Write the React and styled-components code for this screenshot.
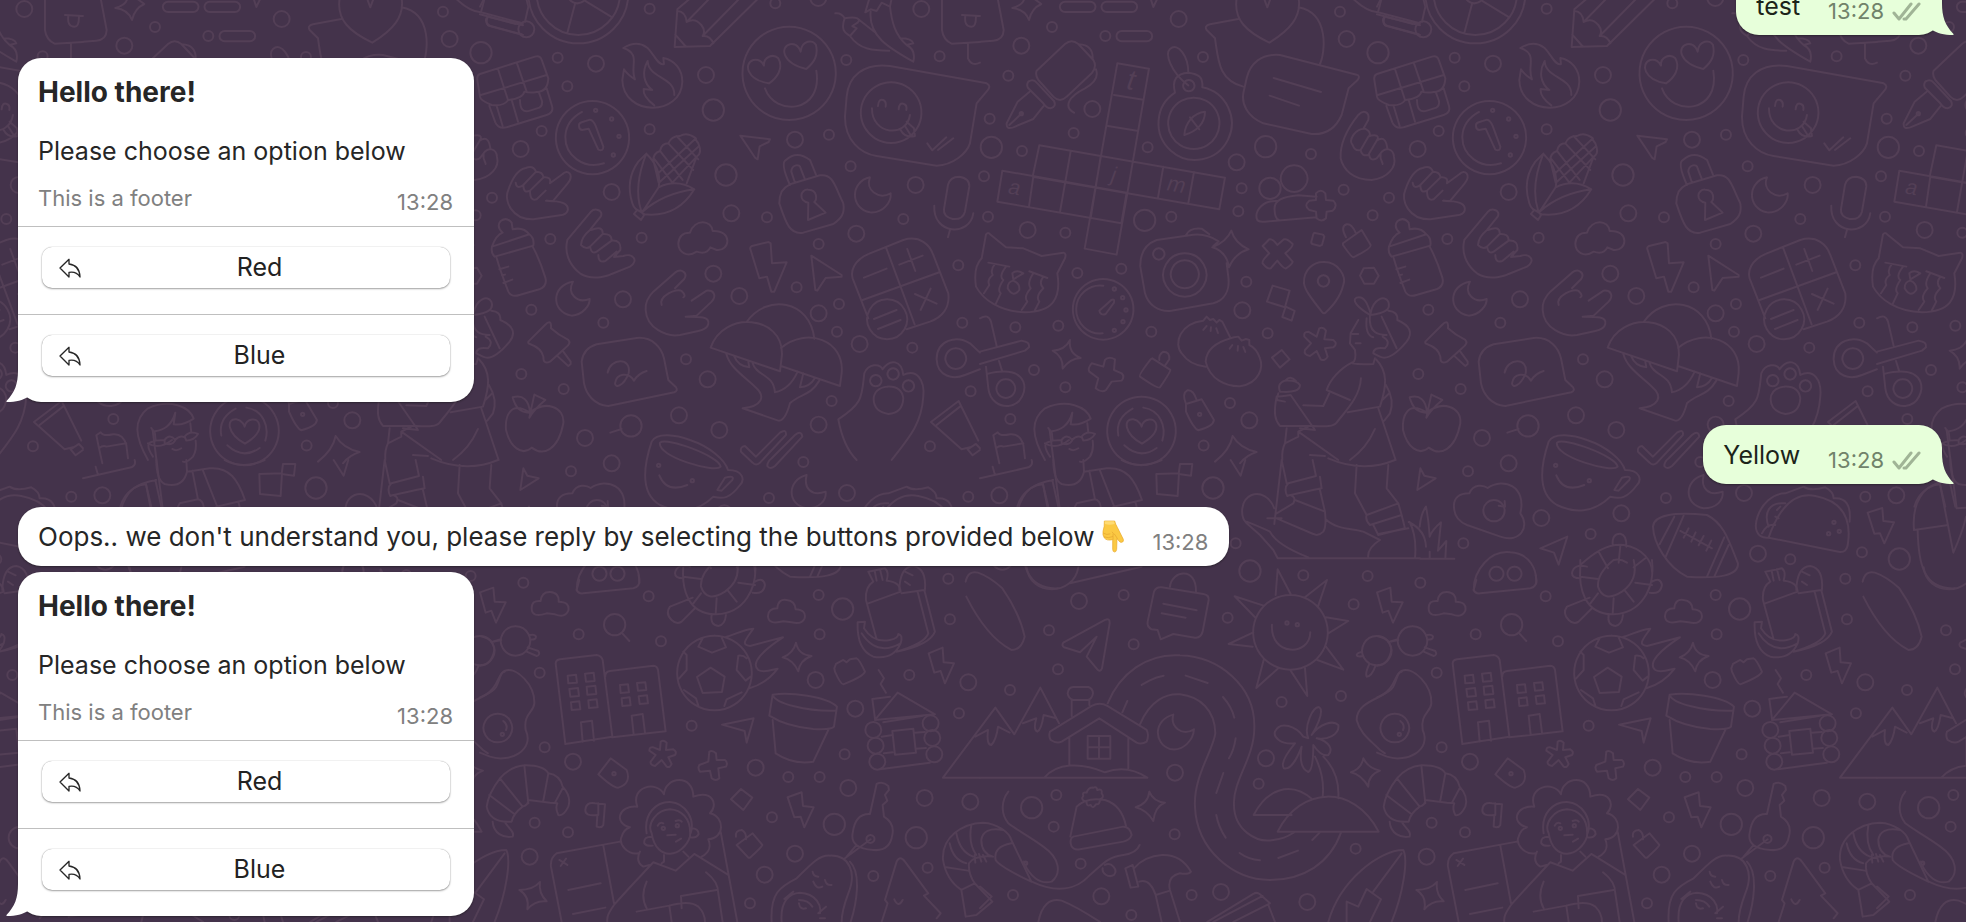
import styled, { createGlobalStyle } from 'styled-components';

const GlobalStyle = createGlobalStyle`
  * {
    box-sizing: border-box;
  }

  body {
    margin: 0;
    background: #44334b;
    font-family: Inter, Roboto, 'Liberation Sans', sans-serif;
    color: #262626;
  }
`;

const Chat = styled.main`
  position: relative;
  display: flex;
  flex-direction: column;
  justify-content: flex-end;
  height: 100vh;
  padding: 0 24px 6px 18px;
  overflow: hidden;
`;

const Wallpaper = styled.svg`
  position: absolute;
  inset: 0;
  width: 100%;
  height: 100%;
  fill: none;
  stroke: #533f56;
  stroke-width: 6;
  stroke-linecap: round;
  stroke-linejoin: round;
`;

const Doodle = styled.text`
  font-family: 'Liberation Sans', sans-serif;
  font-style: italic;
  font-size: ${(props) => props.$size}px;
  text-anchor: middle;
  fill: #533f56;
  stroke: none;
`;

const Bubble = styled.article`
  position: relative;
  flex-shrink: 0;
  align-self: ${(props) => (props.$own ? 'flex-end' : 'flex-start')};
  margin-top: ${(props) => (props.$grouped ? 6 : 23)}px;
  border-radius: 23px;
  background: ${(props) => (props.$own ? '#e7ffda' : '#fff')};
  color: ${(props) => (props.$own ? '#1c2419' : '#262626')};
  box-shadow: 0 1px 2px rgba(16, 16, 16, 0.45);
`;

const TextRow = styled.div`
  display: flex;
  align-items: center;
  height: 59px;
  padding: 0 21px 0 20px;
`;

const Text = styled.p`
  margin: 0;
  font-size: ${(props) => (props.$large ? 26 : 25)}px;
  line-height: 32px;
  white-space: nowrap;
`;

const Meta = styled.span`
  display: flex;
  align-items: center;
  gap: 8px;
  margin-left: 28px;
  padding-top: 10px;
  font-size: 22px;
  line-height: 28px;
  color: ${(props) => (props.$own ? '#71836a' : '#808080')};
`;

const Tail = styled.svg`
  position: absolute;
  bottom: 0;
  ${(props) => (props.$own ? 'right' : 'left')}: -12px;
  width: 24px;
  height: 32px;
  fill: ${(props) => (props.$own ? '#e7ffda' : '#fff')};
  transform: ${(props) => (props.$own ? 'scaleX(-1)' : 'none')};
`;

const Checks = styled.svg`
  width: 29px;
  height: 20px;
  fill: none;
  stroke: #a0b496;
  stroke-width: 3;
  stroke-linecap: round;
  stroke-linejoin: round;
`;

const Hand = styled.svg`
  width: 22px;
  height: 33px;
  margin-left: 8px;
`;

const CardBubble = styled(Bubble)`
  width: 456px;
`;

const CardBody = styled.div`
  padding: 18px 21px 0 20px;
  height: 168px;
`;

const CardTitle = styled.h2`
  margin: 0 0 27px;
  font-size: 28px;
  line-height: 32px;
  font-weight: 700;
`;

const CardFooter = styled.footer`
  display: flex;
  justify-content: space-between;
  margin-top: 17px;
  font-size: 22px;
  line-height: 28px;
  color: #808080;
`;

const CardTime = styled.time`
  padding-top: 4px;
`;

const OptionRow = styled.div`
  height: 88px;
  padding: 20px 24px 0;
  border-top: 1px solid #bfbfbf;
`;

const OptionButton = styled.button`
  display: flex;
  align-items: center;
  width: 100%;
  height: 41px;
  padding: 0 18px 0 17px;
  border: 0;
  border-radius: 10px;
  background: #fff;
  box-shadow: 0 0 1px rgba(0, 0, 0, 0.4), 0 1px 2px rgba(0, 0, 0, 0.35);
  font-family: inherit;
  font-size: 25px;
  line-height: 32px;
  color: #222;
  cursor: pointer;
`;

const OptionLabel = styled.span`
  flex: 1;
  padding: 0 0 2px 6px;
  text-align: center;
`;

const ReplyIcon = styled.svg`
  width: 22px;
  height: 20px;
  fill: none;
  stroke: #262626;
  stroke-width: 4;
  stroke-linejoin: round;
`;

// Width of one wallpaper tile; the drawings repeat after it.
const TILE = 897;

const radii = { s: 15, m: 24, l: 32, d: 5 };

// Every block is drawn at three times its final size.
// circles: small, medium, large rings and dots as [x, y, ...]
const blocks = [
  {
    x: 480,
    y: 0,
    circles: {
      s: [509, 26, 233, 173, 262, 259, 185, 393, 509, 388, 36, 593, 211, 717, 485, 713, 154, 929, 370, 968, 124, 1122, 251, 1167, 618, 1078, 886, 10, 1099, 180, 1047, 404, 1112, 499, 861, 652, 1016, 732, 950, 862, 1077, 912, 1071, 995, 1055, 1203, 1270, 657, 1297, 1043, 1435, 796, 1447, 968, 1472, 1174, 1350, 1339, 1379, 169],
      m: [348, 191, 678, 225, 122, 447, 395, 576, 429, 898, 754, 640, 700, 821, 778, 888, 945, 419, 1015, -6, 1324, 27, 1307, 555, 1129, 701, 1016, 940, 1139, 1032, 683, 1138, 597, 1246, 718, 1290, 315, 1314, 1016, 1274, 139, 88],
      l: [700, 330, 738, 525, 3, 158, 453, 1278],
      d: [347, 331, 395, 357, 417, 409, 400, 465],
    },
    paths: [
      'M0 43L108 72M28 48Q10 56 24 76L125 103M135 65L145 20 140 0M0 20L10 0',
      'M145-20A150 150 0 0 0 445-20M170-20A125 125 0 0 0 420-20M268-2Q290 22 318-2M285 12L263 95M318 4L393 50',
      'M632-6L592 28 584 141 690 138 836-6M592 32Q618 35 620 66 645 52 664 75 678 92 668 108 690 105 700 130M690-6L620 66M780-6L668 108M586 104L616 138',
      'M430 144Q470 120 500 142C520 158 535 200 552 192L550 174C585 180 607 210 607 245 604 350 430 350 427 240L432 208Q443 225 465 238C448 200 485 162 430 144M503 183C485 215 490 250 517 270L491 267Q488 290 523 316M503 183C505 235 585 230 583 285',
      'M0 222L165 170Q182 165 186 182L205 235Q203 275 170 276 150 280 133 275 130 295 85 300 70 320 35 315 0 300 0 290L-8 240Q-10 226 0 222M0 286L200 225M54 207L84 300M111 190L140 275M28 318L46 367Q55 388 80 382L200 345Q222 338 216 318L200 265M50 318L68 378M95 300L114 365M120 300Q120 342 150 332L178 323Q188 318 186 303L177 278',
      'M338 303A110 110 0 1 1 337 303M372 490C310 510 255 465 256 410Q258 362 306 336',
      'M297 377Q296 370 305 367L330 359Q340 360 347 378L370 440Q370 455 355 449L326 386 306 390Q297 388 297 377',
      'M210 550L248 522C262 506 285 524 262 552L218 604 198 602Q270 602 263 632 258 645 240 646L160 658C95 660 70 600 85 570Q105 510 137 504 160 495 168 515 188 515 191 532 215 530 210 550M107 548Q110 570 130 555L168 515M130 555Q130 582 150 572L191 532M150 572Q150 605 170 598L197 572',
      'M499 461C540 500 540 540 536 562L490 632Q465 636 457 610 435 540 475 485L499 461Q460 560 483 630M536 562Q590 535 643 568 590 655 490 643M487 636Q550 580 643 568M462 642L472 630 494 643 483 660ZM536 548L520 480Q520 460 540 453 545 430 565 430 575 407 600 408 620 395 645 413 650 425 655 430 668 460 650 470L620 550M540 453L608 540M524 478L575 545M565 430L640 510M590 408L655 478M536 518L648 415M540 545L655 440M580 545L650 470',
      'M36 740Q32 760 44 770L160 737Q164 715 148 703ZM68 698Q48 680 62 663 80 650 95 668L98 688Q130 680 148 703M50 774Q60 810 85 875 95 893 118 885L178 868Q203 858 196 833 180 780 158 740M58 808L85 800M66 826L75 824M70 849L97 839M36 740Q48 705 68 698',
      'M303 735Q305 710 330 690L362 650C372 632 345 622 333 635L262 720C250 770 280 805 300 820 340 845 390 825 395 822L450 800C480 780 455 758 430 768L402 771M333 690Q370 675 368 702 395 700 395 722 425 720 421 750L402 771M303 735Q318 750 330 740L368 702M330 740Q335 765 350 755L395 722M355 765Q355 790 376 783L410 755',
      'M635 902L680 872C700 870 712 885 695 905L650 947 617 950C660 950 690 950 685 972 682 985 670 990 655 993L600 1005C560 1012 500 985 497 930 495 905 505 890 520 875L585 818C605 803 625 820 612 838L585 865M545 915C535 890 590 862 605 873 617 885 615 890 610 892 630 885 635 902M545 915Q555 930 572 915L610 892M570 925Q570 950 588 945L617 922',
      'M279 845C215 855 210 935 275 947 310 945 330 915 329 897 290 912 260 880 279 845Z',
      'M595 730Q598 697 630 698C645 655 695 660 698 693 760 690 750 755 710 750L691 742Q680 765 650 755C620 775 595 755 595 730Z',
      'M812 750Q808 742 816 738L866 726 872 730 876 790 920 787 883 875 874 875 861 830 838 835Z',
      'M994 767L1085 825 1085 830 1037 834 1012 872 1006 870ZM781 407L870 418 866 426 839 439 833 478 826 474Z',
      'M930 555Q900 490 918 480 950 450 990 480L1008 524M945 548L934 515C935 493 960 490 962 505L975 538M905 575Q915 560 930 553L1020 526C1060 520 1065 560 1090 610 1095 640 1085 655 1060 672L970 698C930 705 918 670 898 610Q898 590 905 575M984 660L985 608C955 603 960 567 985 569 1015 570 1010 600 1003 606L1037 638Z',
      'M1170 532C1110 545 1110 625 1170 637 1210 640 1235 605 1232 580 1195 600 1155 570 1170 532Z',
      'M928 80A140 140 0 1 1 927 80M855 265C885 350 1030 340 1009 212M867 250C800 240 790 190 820 180 845 175 850 195 852 197 850 170 880 160 895 175 912 205 890 235 867 250M979 207C905 190 900 140 930 133 955 128 962 155 962 155 965 120 1000 118 1008 135 1015 165 1005 185 979 207',
      'M1066 40Q1085 38 1094 55 1130 48 1138 60L1185 97M1094 55C1080 95 1100 100 1110 108L1130 85 1117 78 1133 68 1138 60M1110 108C1140 150 1180 152 1228 152M1168 -4L1156 37 1172 28 1190 33 1205 8 1230 20 1235-4M1172 35C1165 110 1230 145 1300 185C1305 165 1300 145 1280 135 1245 105 1235 65 1230 18M1262 115Q1295 115 1300 130L1280 135',
      'M1386-5L1386 90Q1390 120 1415 131L1500 126M1464 132L1464 175Q1475 200 1500 188M1446 45L1500 48M1456 48Q1452 80 1475 80 1488 80 1488 50',
      'M1500 246L1230 198C1150 188 1105 230 1100 290L1095 350C1095 420 1140 460 1190 468L1370 497C1420 495 1460 460 1470 430L1490 310 1500 298',
      'M1234 247A91 91 0 1 1 1233 247M1176 325C1175 405 1280 415 1290 345M1194 318Q1196 295 1210 300 1220 305 1217 320M1256 328Q1258 306 1272 312 1282 316 1279 330M1262 390Q1275 415 1305 408L1302 385 1280 365M1275 378L1292 405M1342 430L1357 451 1399 412M1374 450L1420 415',
      'M1404 555Q1410 530 1438 530 1470 535 1468 560L1455 635Q1448 660 1418 657 1390 650 1392 628ZM1363 617C1358 705 1470 710 1480 640M1410 690L1404 712',
      'M1170 760L1270 720C1320 705 1350 735 1360 765L1405 880C1410 920 1390 950 1350 965L1280 988M1170 760C1120 780 1112 815 1118 835L1165 955M1218 742L1304 973M1148 900L1378 817M1152 833L1220 806M1258 794L1328 767M1282 747L1306 813M1305 882L1370 911M1352 866L1322 930M1222 898A60 60 0 1 1 1221 898M1182 957L1250 930M1194 987L1262 960',
      'M800 966C860 880 990 900 1003 1016M692 1043C730 930 910 945 906 1065L900 1114ZM903 1044C980 980 1095 1020 1085 1120L1080 1158 903 1098M739 1062C750 1100 780 1120 825 1160 860 1190 845 1220 788 1225L895 1262Q915 1265 930 1210C960 1180 990 1190 1018 1142M762 1068Q775 1100 808 1102L805 1085M818 1090C830 1130 880 1120 885 1177 910 1172 935 1155 953 1115M970 1120L960 1162Q990 1160 1005 1134',
      'M1130 1380Q1090 1340 1075 1258C1150 1210 1145 1190 1153 1120 1165 1090 1200 1090 1208 1108 1230 1075 1265 1080 1270 1125 1310 1105 1335 1140 1330 1190C1325 1270 1290 1310 1235 1380M1222 1160Q1265 1158 1270 1195 1268 1240 1225 1242 1182 1235 1181 1198 1182 1165 1222 1160M1188 1125A17 17 0 1 1 1187 1125M1240 1105A17 17 0 1 1 1239 1105M1286 1141A17 17 0 1 1 1285 1141',
      'M1500 1058L1470 1030C1430 1005 1370 1020 1370 1078 1372 1130 1420 1140 1455 1125L1500 1108M1428 1045A31 31 0 1 1 1427 1045',
      'M1353 1266L1436 1203 1495 1322M1353 1266L1445 1348 1470 1342M1370 1275L1440 1220M1463 1348L1488 1332 1500 1345M1463 1348L1478 1366 1500 1350',
      'M145 1025L195 975Q215 955 213 985 235 1005 265 1020 275 1030 255 1045L210 1085Q190 1095 190 1070 185 1045 150 1032 143 1030 145 1025M234 1070L265 1098 272 1092 272 1085 250 1055',
      'M305 1085Q310 1045 350 1033L470 1014C520 1010 545 1045 552 1075L565 1140 588 1162Q595 1172 583 1177L385 1218C340 1215 318 1180 312 1150ZM383 1118C390 1075 455 1070 446 1120 430 1160 405 1165 405 1150 410 1120 445 1115 462 1142Q475 1120 500 1113',
      'M150 1238C90 1200 75 1250 78 1290 90 1340 125 1370 155 1343 190 1370 235 1350 250 1270 255 1220 195 1200 150 1238M98 1192Q145 1180 150 1238 110 1240 98 1192M163 1184L196 1200Q165 1225 148 1253Q155 1220 163 1184M391 1298L425 1287',
    ],
  },
  {
    x: 980,
    y: 0,
    circles: {
      s: [216, 81, 85, 227, 29, 356, 126, 453, 281, 399, 376, 108, 503, 442, 12, 529, 24, 650, 256, 698, 292, 819, 424, 806, 574, 650, 775, 634, 785, 565, 669, 171, 993, 462, 1080, 35, 1091, 569, 1178, 646, 799, 845, 863, 1000, 514, 995, 235, 977, 106, 982, 162, 1110, 256, 1162, 91, 1257, 750, 1209, 671, 1337],
      m: [124, 137, 337, 327, 596, 57, 1100, 117, 770, 487, 143, 690, 787, 931, 808, 1261],
      l: [34, 442, 494, 661, 857, 440, 870, 565],
      d: [403, 867, 428, 893, 438, 930, 429, 965, 403, 991, 659, 1243, 124, 341],
    },
    paths: [
      'M97 24Q130 15 133-5M97 24Q135 28 147 60 155 25 184 12L162-4M53-5L71 90Q70 120 40 122L0 125M0 246L20 250Q35 258 22 272L0 298',
      'M255 5H331A15 15 0 0 1 331 36H255A15 15 0 0 1 255 5M380 5H456A15 15 0 0 1 456 36H380A15 15 0 0 1 380 5M425 93H501A15 15 0 0 1 501 124H425A15 15 0 0 1 425 93M512-4L520 21 532-4',
      'M170 212L255 132Q275 115 295 132L340 180Q352 200 335 220L260 290Q240 310 220 290L175 240Q165 225 170 212M297 133Q340 135 338 177M348 208Q360 240 315 265C265 290 250 320 282 338M145 245Q160 235 170 248L222 303Q230 320 212 325 200 325 190 310L145 265Q138 255 145 245M148 276L113 305 80 370Q78 390 100 382L160 357 190 319M88 375L124 341',
      'M412 190L507 206 410 764 314 746ZM178 436L735 533 718 628 158 530ZM67 512L440 578 424 670 52 605ZM402 285L490 299M384 378L471 392M272 454L240 636M160 530L147 620M362 470L332 655M550 500L534 593M642 516L625 609',
      'M585 278C575 240 590 220 625 218 655 222 670 230 667 262A110 110 0 1 1 585 278M642 293A77 77 0 1 1 641 293M675 335C640 338 615 370 613 405 650 395 675 370 675 335M630 352L658 388M625 256C570 215 555 160 570 147 595 125 625 170 625 217M627 240A17 17 0 1 1 626 240',
      'M775 57L690 73Q672 77 680 90L705 115C715 180 715 240 790 260M770-5C760 60 800 95 868 128 930 90 965 50 956-5M852-5L862 22 872-5M956 22C1050 40 1035 160 1020 192',
      'M800 235C810 190 845 160 900 165L1130 224Q1142 228 1133 240L1106 265 1085 345C1065 390 1035 405 995 402L850 370C800 350 785 310 790 280ZM881 234L1023 276M869 287L957 317',
      'M1150 386L1165 360C1170 335 1150 328 1135 345 1095 395 1080 440 1082 475 1090 510 1120 540 1175 540 1225 535 1250 500 1242 470 1240 445 1215 440 1202 460 1198 480 1210 490 1208 492M1118 435C1105 420 1125 385 1155 386 1175 395 1170 408 1165 410 1190 400 1200 410 1190 422 1215 405 1220 430 1222 445M1118 435Q1125 455 1142 450L1165 410M1142 450Q1145 470 1165 465L1190 422M1168 465Q1170 485 1190 475L1202 460',
      'M1118-5Q1160 35 1194 37L1320 70M1215 50L1320 76M1215 50Q1205 70 1220 78L1320 105M1194 37L1205-5',
      'M943 496A40 40 0 1 1 942 496M893 603C850 600 825 630 830 655 832 665 840 667 855 665L1010 652M884 632C880 600 910 590 955 586L1010 590M884 632Q885 655 896 660M1008 580Q1022 565 1036 580L1038 600 1060 602Q1075 617 1058 632L1040 635 1038 655Q1025 668 1010 655L1008 635 988 630Q970 617 988 602L1008 600Z',
      'M18 703Q25 695 30 703L78 742 130 745 185 768 250 758Q260 760 255 775L232 820C245 900 215 935 135 937 60 935 10 900-12 860-18 820-10 790 5 775ZM25 788L88 800M45 792Q30 810 38 825 20 840 28 855L12 880M78 800Q55 830 70 840 50 870 62 880L48 910M148 814L202 834M160 820Q140 850 152 865 130 890 142 905L125 930M190 830Q175 850 190 865 165 890 178 905L165 930M97 820Q110 808 130 820L100 838ZM100 842Q120 850 118 870 100 895 83 865 83 845 100 842',
      'M370 837A91 91 0 1 1 369 837M370 857A72 72 0 1 0 368 1000M358 932L394 900Q405 895 402 908L377 942Q362 948 358 932',
      'M700 738L716 724Q680 700 640 704L530 720C490 735 480 765 481 800L495 880C505 915 535 935 570 933L700 910C735 900 750 870 745 830L740 790M537 745A17 17 0 1 1 536 745M615 760A65 65 0 1 1 614 760M615 781A42 42 0 1 1 614 781M618 705Q630 682 665 686L688 703M697 742Q740 725 754 692 765 730 806 748 765 760 747 802 740 755 697 742',
      'M848 738L868 718Q878 715 892 735L912 718Q922 715 938 732 940 740 916 760L938 785Q938 792 918 805 912 808 892 782L872 805Q862 808 848 790 845 782 868 760ZM1005 699Q1002 697 1000 703L994 725Q993 732 1000 733L1020 738 1026 735 1033 710 1029 704ZM1089 730L1145 690 1172 735Q1175 745 1120 772Q1115 772 1089 735ZM1098 712Q1080 680 1100 673 1115 670 1127 698M1140 827L1151 805 1182 803 1196 827 1182 851 1153 851Z',
      'M1032 786C1075 785 1100 830 1090 855 1080 895 1055 920 1037 938Q1032 942 1026 936C990 890 975 870 972 850 970 810 1000 785 1032 786M1031 826A17 17 0 1 1 1030 826',
      'M878 857L929 872 915 922 861 905ZM917 920L944 933 935 962 907 951ZM905 1050L929 1078 900 1103 876 1073Z',
      'M1018 985Q1030 980 1038 992L1033 1018 1060 1020Q1075 1032 1060 1042L1035 1045 1043 1070Q1035 1085 1022 1078L1010 1053 990 1068Q970 1065 975 1050L993 1030 973 1010Q970 995 985 995L1010 1010Z',
      'M752 1015L727 965 718 960 710 968 700 957 690 960 680 950 670 962C600 970 580 1030 605 1060 625 1090 655 1098 677 1100M752 1015Q680 1035 677 1085C690 1140 740 1160 780 1159 840 1150 850 1100 840 1075Q830 1045 808 1035L808 1020 798 1017 785 1022 775 1010 762 1012 752 1015M680 978L670 990M693 982L692 993M709 985L714 999M757 1035L749 1046M774 1038L773 1052M790 1041L796 1056',
      'M270 1020Q255 1050 218 1052 250 1070 248 1106 270 1075 302 1074 265 1060 270 1020M375 1080Q385 1068 405 1078L402 1110 425 1120Q435 1130 425 1142L395 1145 378 1170Q365 1180 347 1165L355 1135 328 1115Q322 1105 335 1090L370 1100ZM517 1075L571 1110Q572 1115 540 1162 535 1168 480 1130 475 1125 512 1078ZM538 1080Q535 1065 550 1055 570 1055 568 1078L555 1097',
      'M0 955Q25 940 33 965L50 1038M0 1055L125 1022Q150 1025 147 1042L135 1052 0 1092M57 1083L66 1112M18 1100L25 1165C30 1205 60 1220 85 1218 125 1215 140 1170 130 1145 115 1110 70 1110 20 1122M78 1138A28 28 0 1 1 77 1138',
      'M485 1190A103 103 0 1 1 484 1190M486 1331C430 1300 430 1255 460 1258 480 1262 485 1280 485 1280 490 1255 525 1250 529 1275 533 1300 505 1320 486 1331M458 1226Q405 1255 415 1307M490 1223C540 1230 560 1280 547 1322M433 1336Q480 1380 530 1344',
      'M618 1212Q605 1180 622 1171 640 1168 650 1200M618 1212L665 1198 702 1260Q700 1280 655 1291 640 1285 618 1235ZM758 1308Q750 1350 705 1385M758 1308Q780 1345 830 1356 800 1365 780 1390',
      'M195 1380C155 1310 150 1260 195 1225 260 1195 320 1220 332 1256Q300 1278 272 1273L277 1238C265 1280 240 1290 215 1294L218 1322 245 1320M205 1284L215 1300M322 1270L325 1298M210 1370Q180 1325 215 1325M245 1320Q260 1300 277 1320 270 1338 245 1330ZM305 1310Q320 1290 345 1302 335 1320 310 1322ZM277 1320Q290 1305 305 1312M268 1347Q280 1355 295 1345M338 1322Q342 1350 330 1370 310 1390 300 1385M40 1306L53 1297Q60 1310 90 1303 120 1300 130 1335M40 1306L48 1345Q60 1335 70 1340L130 1330M48 1345L58 1390M130 1335L135 1375',
      'M1170 945C1130 920 1115 900 1130 893 1155 885 1165 920 1172 940 1180 895 1215 885 1225 905 1235 930 1210 940 1172 945M1225 932Q1255 935 1252 960 1310 985 1280 1025 1230 1085 1200 1070L1180 1060Q1180 1040 1215 1045 1235 1025 1208 1010M1205 950L1250 1045M1170 945C1165 1000 1195 1005 1220 1005M1160 955Q1155 1005 1180 1012M1135 960L1112 1000 1110 1030 1125 1050Q1130 1080 1117 1090 1140 1095 1180 1092L1185 1075M1117 1002L1135 1002M1127 1030L1142 1030',
      'M1117 1087C1080 1105 1050 1140 1040 1170L1110 1200M1048 1180L1030 1218 970 1216M1143 1135C1140 1195 1090 1240 1070 1268 1060 1280 1040 1280 1000 1278L900 1278C885 1260 880 1240 890 1190M1188 1078C1225 1115 1220 1160 1200 1220L1103 1237M1195 1225L1247 1380M1218 1155Q1245 1200 1230 1240L1213 1262M1207 1200L1228 1180M890 1190Q900 1190 932 1185L1005 1290 960 1285M900 1175Q890 1150 915 1142 950 1140 960 1155 960 1180 900 1175M918 1140Q930 1125 948 1143M895 1180L890 1200 915 1205M920 1285L915 1330Q905 1350 907 1380M955 1295L1075 1380M915 1330L955 1310 955 1295 985 1280M1185 1287Q1160 1345 1110 1380M990 1365L1035 1368',
    ],
    text: [
      [449, 268, 't', 86],
      [100, 583, 'a', 64],
      [398, 545, 'j', 64],
      [586, 575, 'm', 66],
    ],
  },
  {
    x: 480,
    y: 430,
    circles: {
      s: [273, 124, 259, 340, 641, 312, 867, 204, 970, 96, 1240, 388, 1465, 200, 1455, 367],
      m: [395, 100, 493, 264, 733, 250, 1101, 189, 1143, 371],
      l: [351, 242],
      d: [536, 106, 637, 152, 1371, 277, 1355, 311, 1387, 304],
    },
    paths: [
      'M95 276Q145 300 147 350M130 386H232M114 384Q120 320 98 276M128 290Q132 250 147 230 155 270 158 320 165 300 192 277L183 362 208 333 205 384M158 365V384',
      'M130 115L142 137 176 145 121 180ZM232 240C225 200 250 190 277 190 290 160 320 165 332 174 380 140 450 170 430 250 460 290 430 340 370 320L270 285Q235 270 232 240M383 213L384 230 365 227',
      'M515 35C530 5 590 15 630 30 690 50 735 90 744 120C790 120 795 150 780 165 750 205 730 208 700 200 650 250 590 250 540 225 480 190 490 110 515 35M540 38C560 20 720 80 722 110 705 130 530 80 540 38M712 180L735 143Q765 135 757 150L725 182ZM538 136Q560 190 622 165',
      'M783 65Q780 50 795 48L828 80 900 8Q920-5 918 15L838 100Q828 108 818 98ZM862 108Q862 95 875 85L945 15Q965 0 967 20L885 108Q870 120 862 108M980 135C920 150 920 225 980 235 1020 235 1040 210 1037 185 995 200 970 175 980 135',
      'M828 290C830 255 890 245 990 255 1040 280 1055 330 1083 400 1085 440 1020 445 930 440 870 410 830 340 828 290M892 260L848 343M920 257L865 383M1042 322L990 440M1055 345L1012 440M910 303L1005 355M935 295L920 323M956 307L943 335M980 318L965 346M1003 332L988 362',
      'M1175 323Q1225 180 1315 198 1430 220 1413 340 1410 370 1385 365ZM1175 323C1100 330 1145 190 1225 190L1280 170Q1300 185 1345 172 1370 185 1370 205 1425 200 1418 275M1155 310Q1170 280 1195 285M1175 290C1160 250 1175 215 1225 220M1210 230L1200 240M1195 260L1205 265',
      'M490 355L571 320 545 404 531 368ZM290 480C290 420 340 360 400 367 460 370 480 420 478 460',
      'M707 345Q705 310 730 311 750 315 748 350M610 405C650 370 690 340 740 345 800 355 825 395 825 425M610 410V390M585 430Q590 400 630 410M585 430Q585 445 610 445M665 365L693 415M730 348L725 398M805 385L770 412M710 390Q730 385 750 398',
      'M1258 480Q1260 410 1300 408 1340 415 1335 480',
    ],
  },
  {
    x: 480,
    y: 560,
    circles: {
      s: [130, 68, 296, 223, 506, 109, 543, 244, 179, 338, 194, 562, 164, 788, 264, 817, 635, 497, 1016, 105, 1019, 223, 1405, 56, 1410, 178, 1288, 345, 1437, 460, 1094, 583, 925, 651, 1019, 651, 876, 772, 1180, 948, 1343, 923, 810, 1030],
      m: [279, 605, 149, 890, 827, 623, 1007, 360, 1126, 446, 1105, 684, 1465, 367, 1334, 714, 1471, 725, 945, 881, 854, 944, 1180, 510, 1187, 557, 1192, 605, 1352, 490, 1357, 534, 1363, 583],
      l: [1088, 147, 404, 194, 1063, 793, 1309, 833],
      d: [402, 641, 67, 523, 550, 805, 592, 797],
    },
    paths: [
      'M0 97L40 83 44 125 77 127 48 188 34 152 17 158ZM427 220L448 243M155 145Q155 120 182 123 185 95 210 96 238 98 236 125 270 125 265 152 255 175 225 163L200 160Q155 175 155 145M864 168Q865 145 892 145 895 115 920 120 945 122 947 148 980 150 974 175 965 195 935 187L910 184Q864 195 864 168',
      'M290 90Q295 102 310 100L460 85Q480 80 478 60L476 45M290 90L298 60M359 20A21 21 0 1 1 358 20M413 20A21 21 0 1 1 412 20',
      'M610 20C605 80 620 165 710 163 790 160 835 90 825 0M663 80Q660 40 710 0M663 80Q680 130 735 95 785 60 770 0M610 50L663 57M663 100L638 133M710 115L707 163M742 90L770 125M775 68L825 75M855 75Q850 50 825 65M855 75Q850 105 818 98M638 113L570 140Q555 160 575 180 590 195 605 185L645 145M695 165Q690 195 715 198 735 195 738 165',
      'M0 228Q40 235 43 270 35 315 0 317M38 245L62 238M107 199A44 44 0 1 1 106 199M150 225Q165 222 168 230 168 240 152 238M143 262L175 273Q182 285 170 288L140 275M0 412C60 390 50 340 75 332 110 320 165 375 163 430 160 460 130 460 137 510 165 570 90 610 30 590L0 578M54 461A43 43 0 1 1 53 461M70 483Q85 495 78 510',
      'M256 552L227 310Q228 300 240 298L350 285Q365 288 368 300L397 530ZM376 350Q375 335 390 333L520 317Q532 318 534 330L557 514 397 532M263 347L288 344 291 368 265 370ZM315 341L341 338 344 363 318 365ZM268 387L294 384 297 408 271 410ZM320 380L346 377 349 402 322 404ZM273 427L298 424 301 448 275 450ZM325 421L350 418 353 442 327 444ZM420 375L444 373 447 397 422 399ZM471 369L496 367 499 390 474 392ZM425 415L449 412 452 436 427 438ZM476 409L501 406 504 430 479 432ZM308 545L303 487 336 482 342 542M461 524L455 467 488 462 495 518',
      'M704 227A112 112 0 1 1 703 227M692 323L734 350 726 396 668 399 651 351ZM668 235L655 260 696 278 738 262 725 232M610 275L620 285 620 330 597 356M775 287L770 330 797 362 812 350M775 287Q790 285 800 295M612 390L648 415 656 440M733 438L740 418 785 397M735 232C770 222 785 210 820 206 800 235 780 255 810 258L909 232C850 270 810 310 835 330 850 340 875 330 893 326Q860 370 808 385',
      'M948 248Q940 280 908 292 940 300 955 334 960 300 995 288 955 285 948 248M1063 325L1068 312 1090 300 1100 307 1110 298 1130 295Q1138 298 1155 335 1150 350 1090 373 1082 373 1065 335ZM726 494L821 475 800 548 794 513Z',
      'M878 404C930 395 1040 410 1071 440L1062 500Q1055 510 1000 507 920 500 868 467ZM878 404C885 430 980 455 1068 452M878 480L887 580Q940 615 1000 605L1045 510',
      'M1177 417L1230 410M1177 417L1185 475M1185 480L1253 398 1365 463ZM1196 330L1212 355 1202 372 1218 398M1210 487L1330 467M1205 530L1238 525M1212 580L1238 577M1200 628L1350 608M1303 518L1335 516M1307 566L1338 564M1237 513L1300 506 1308 578 1245 584Z',
      'M1133 187L1155 185 1152 205Q1180 250 1230 240 1255 235 1255 222 1270 225 1262 250 1240 300 1180 290 1130 270 1133 187M1145 220Q1190 290 1262 250M1190 238L1158 120Q1155 80 1180 65L1165 35 1215 25Q1228 35 1220 62 1260 65 1262 95L1165 130M1333 90L1265 100M1333 90L1365 215Q1350 255 1250 275M1313 95L1345 220Q1335 250 1250 275M1184 32L1190 62M1200 28L1208 60M1262 95L1258 80M1275 35L1298 46M1275 65L1290 75',
      'M1346 280L1388 263 1391 307 1422 310 1395 370 1382 333 1363 338ZM923 712L965 697 969 738 1001 742 973 802 962 770 943 772Z',
      'M20 740Q25 700 60 655 90 620 133 616 190 615 205 640 240 645 248 680 275 710 265 740 250 770 235 765 225 745 232 730L210 728 145 720Q145 735 128 740 100 760 95 785 30 790 20 740M60 655L128 740M133 616L145 730M205 640L190 722M28 705L100 760M248 685L225 728M38 785C40 820 70 835 98 830 105 815 85 805 75 787',
      'M392 595L440 630Q455 670 415 683 400 685 355 643ZM542 545Q550 538 560 548L558 570 580 568Q592 575 585 585L565 592 575 612Q570 625 560 620L545 600 525 618Q510 615 512 605L527 585 508 572Q508 560 520 562L540 570ZM688 575Q698 570 708 580L710 600 735 600Q745 608 738 620L715 625 718 655Q708 665 695 655L690 632 660 635Q652 625 658 615L685 605ZM316 750Q318 725 345 730L375 733 370 795Q365 805 350 800L352 765Q315 770 316 750M355 730V765M783 687L817 713 790 750 753 718Z',
      'M475 880C440 885 415 850 425 830 435 800 450 805 450 802 400 790 415 735 472 740 450 680 530 660 552 703 555 650 640 640 640 710 700 690 715 735 690 760 735 770 735 835 685 838 690 850 695 875 665 890M500 820C490 760 530 725 570 726 620 730 645 780 632 820M515 820C500 790 530 750 570 748 600 750 635 770 630 830 610 890 530 910 515 820M515 830Q490 830 493 850 500 860 518 857M635 805Q655 805 656 822 650 835 632 832M533 797Q540 785 550 790M587 783Q600 778 605 785M562 826L587 824M588 845L603 836M480 875Q465 905 490 920L508 915M552 885V905L545 910M610 875L625 890M520 907L587 932 643 882 745 945M520 907C480 950 450 980 402 1035 385 1060 380 1070 382 1086M722 815L772 1086M420 845L230 880Q210 895 213 920L245 1086M370 857L402 1030M238 900L262 915M258 896L242 918M265 990L362 970M279 1062L376 1043M500 965Q480 1010 500 1045M678 937Q715 965 715 1000L728 1086M470 1055L568 1037 575 1086M605 1045L603 1008 710 990M568 1037Q630 1020 655 1040 675 1060 675 1086',
      'M180 966Q160 990 118 990 150 1010 142 1048 165 1020 200 1024 175 1000 180 966M768 830Q765 812 785 810 800 818 798 838M770 855L818 820 847 855Q845 862 810 893L805 893Z',
      'M1190 672Q1208 662 1225 678L1227 690 1215 705 1222 722 1208 735 1212 770Q1245 790 1237 825 1230 875 1180 870 1110 865 1118 820 1125 760 1170 762ZM1172 825A12 12 0 1 1 1171 825M1172 838L1095 895M1130 855L1100 890M875 1086C870 1000 900 980 950 955 1000 905 1020 885 1050 887 1110 885 1130 940 1105 1000 1090 1040 1085 1060 1085 1086M1110 905C1145 940 1130 1030 1112 1086M905 1086C900 1020 930 1000 960 998 1010 1000 1025 1040 1020 1060M913 1017L940 995M998 935Q1000 950 1015 950M1000 965Q1010 990 1027 980M1035 960Q1040 978 1055 975M957 1020Q985 1020 997 1040M957 1030Q960 1050 978 1045M1015 1060L1038 1040M1020 1075L1035 1075',
      'M1215 1020L1250 905Q1260 885 1275 905L1345 1000 1332 1007 1382 1060 1370 1075M1215 1020L1223 1030 1205 1086M1243 1018Q1255 1045 1268 1020',
    ],
  },
  {
    x: 980,
    y: 460,
    circles: {
      s: [431, 405, 207, 511, 461, 553, 234, 628, 90, 690, 743, 473, 970, 346, 1163, 348, 1121, 433, 1083, 708, 905, 726, 836, 971, 1127, 1166, 229, 1005, 221, 1100, 584, 1123, 302, 1211, 99, 1305, 454, 1365, 635, 1305, 767, 250],
      m: [58, 106, 297, 423, 585, 938, 858, 895, 364, 1309, 723, 1296, 982, 1326],
      l: [699, 84, 810, 333, 155, 1043],
      d: [921, 489, 952, 494, 135, 1210],
    },
    paths: [
      'M0 55L145 22Q160 15 155 0M38 20L45 45M112 140Q130 75 220 60M188 68L205 140M217 60L235 140M220 0Q220 60 245 72 300 85 312 35L310 0M312 35L380 25C440 20 465 60 486 120L400 140M328 32L345 118M360 32L402 138M285 140L290 130 345 118Q360 122 362 140M466 125L470 140M529 42L597 40 593 108 531 102ZM600 12L637 12 633 47 596 42ZM752 0L782 47 796 0M425 0Q480 30 545 0',
      'M905 0L883 192M905 0L920 70M998 0L1008 48 925 70Q910 85 922 108 930 105 1025 85L1020 50M930 105Q950 110 940 130L890 160M1020 90L1035 155 945 120M1035 155Q1040 200 1030 215 1015 230 1000 222L890 175M862 175H905M883 145C870 110 840 95 815 105 780 120 780 170 800 190L840 225 880 270 893 295M800 185Q850 205 870 215 890 255 985 292M1037 178C1070 210 1120 205 1150 215L1200 240Q1160 265 1165 295M893 295H1320M1130 15L1125 100 1160 165 1255 130 1220 85 1225 15M1045-5Q1150 40 1245 0M1160 165Q1155 180 1170 195L1265 165 1255 130M1180 195L1195 225 1275 205 1265 165M1195 222L1285 205',
      'M140 322C150 410 280 410 295 322M270 370L485 320',
      'M250 548L375 480Q390 472 389 490L366 625Q360 638 352 628L320 590 350 530 300 577 252 562Q244 556 250 548M522 395Q528 380 545 382L670 402Q688 405 686 420L668 515Q662 535 645 533L580 522 542 538 533 510 515 508Q500 500 503 485ZM550 431L650 451M545 460L617 473M570 380C575 330 650 320 648 395',
      'M932 405A112 112 0 1 1 931 405M876 494C870 590 990 590 991 517M887 405L893 328 932 402M975 412L1041 360 1014 440M1038 472L1105 483 1045 520M1038 560L1090 629 1012 600M975 625L982 708 932 632M895 625L829 684 851 600M818 560L746 552 820 517M825 472L764 409 851 437',
      'M1191 528A44 44 0 1 1 1190 528M1234 545L1255 540M1147 575Q1132 578 1130 585 1132 592 1148 588M1168 612Q1155 640 1160 650 1175 650 1187 616M1266 635C1250 640 1255 650 1240 680 1220 715 1130 720 1130 780 1140 820 1170 840 1200 870L1215 880',
      'M383 730C420 640 500 580 600 586 720 590 825 680 823 800 825 890 760 960 762 1030 760 1110 830 1150 880 1140 920 1135 930 1125 942 1117M480 793C510 720 560 700 600 703 660 710 705 750 706 820 700 870 640 950 645 1040 650 1170 760 1260 870 1260 970 1260 1050 1210 1083 1118M427 757L442 723M485 675L508 662Q530 650 551 647M617 647L683 669M729 711Q755 740 763 773M767 835Q762 870 747 895M730 939L709 999M709 1065Q715 1100 737 1133M779 1179Q805 1198 840 1201M895 1194L954 1172M997 1140L1019 1118',
      'M210 815L335 738Q360 725 382 738L500 810Q508 825 500 845 485 855 470 848L358 775 245 845Q230 852 212 840 205 828 210 815M268 830V915M445 835V925M263 700Q265 682 280 681H325Q338 685 339 700 336 718 322 720H280Q265 715 263 700M275 720V768M328 720V735M323 828H391V896H323ZM357 828V896M323 862H391M193 953C230 910 300 905 375 937 420 920 460 925 502 953M0 953H502',
      'M580 764C520 780 520 850 570 867 610 875 640 840 642 808 605 830 570 800 580 764M508 995Q505 1030 467 1042 500 1050 520 1083 525 1040 555 1028 520 1025 508 995M1150 895Q1145 925 1113 937 1145 945 1165 980 1165 945 1200 932 1165 925 1150 895',
      'M985 835C970 800 1000 735 1018 742 1035 755 1005 810 995 825 1020 790 1060 780 1075 795 1080 825 1040 840 1010 835 1050 845 1060 870 1045 885 1025 890 1010 870 1000 855 1000 880 1000 930 985 936 960 925 960 890 965 860 950 900 930 930 912 925 900 910 920 880 945 850 900 855 880 830 885 815 900 780 950 800 970 830ZM1005 890Q1035 950 1028 1012M1030 890Q1080 940 1075 1015M821 1065C860 990 930 960 997 1018M821 1065H935M893 1115C960 980 1120 970 1196 1115Z',
      'M85 995C65 1020 60 1060 85 1090 110 1110 150 1130 190 1160 240 1195 245 1240 215 1265 180 1275 150 1250 130 1205M155 1265C230 1300 290 1290 330 1245 370 1210 385 1190 430 1185Q470 1180 479 1155M375 1215C395 1205 415 1230 402 1245 385 1255 365 1240 368 1225',
      'M271 1130L290 1040Q320 1010 375 1020 425 1035 438 1098M280 1130L430 1100Q450 1100 455 1125 450 1140 430 1145L300 1168Q275 1172 272 1150 270 1135 280 1130M340 983Q350 978 352 990 368 985 365 1000 375 1012 360 1018 360 1035 348 1033 338 1050 332 1035 318 1040 320 1025 300 1020 310 1008 305 995 320 998 325 982 340 983',
      'M436 1225L458 1215 475 1280 452 1283ZM462 1225C500 1180 590 1160 633 1235Q625 1245 600 1240 560 1250 570 1290L600 1386M478 1265Q510 1255 527 1305L545 1386M527 1305L570 1292M682 1386L820 1302Q830 1295 840 1303L870 1330 760 1386M700 1386L848 1308M865 1335L885 1386M175 1386Q190 1310 245 1322 290 1340 360 1386',
      'M1045 1386C1080 1260 1200 1170 1270 1170 1285 1200 1270 1300 1235 1386M1265 1180L1180 1295M1100 1386V1325L1135 1340 1160 1287 1203 1318 1170 1386M0 1280L35 1310 0 1345',
    ],
  },
  {
    x: 943,
    y: 430,
    circles: { l: [178, 387], d: [248, 1300] },
    paths: [
      'M83 248L127 234 130 273 162 277 133 340 120 310 103 311ZM222 300C215 220 250 165 300 163M222 300L320 286M233 300C235 400 250 480 345 475M300 163L340 368Q370 300 378 260M320 0L350 235 378 233M306 40Q340 60 378 30',
      'M68 455Q75 420 105 428 140 440 178 475 230 550 245 620 235 660 205 660 130 620 70 500 68 455M90 505Q80 440 145 467M90 505Q110 475 145 467M83 440Q95 430 110 430M178 475L300 530Q315 550 295 560L237 573M88 530V670Q95 690 110 683L155 628M198 660L207 720Q218 735 232 725L265 695M220 650Q230 635 245 650L270 690Q268 705 253 703ZM245 628L303 660Q308 675 268 690',
      'M111 1043H0L157 833 214 913 292 773 348 880M97 920L135 900Q130 945 145 945 160 930 165 890L200 908M240 880L280 865Q270 900 283 905 295 900 302 855L340 865',
      'M68 1460L55 1380 95 1360 148 1415 100 1455ZM0 1290C-5 1220 60 1180 120 1178 165 1180 200 1210 205 1230L265 1355Q170 1310 158 1290 150 1250 205 1240M0 1290Q10 1350 55 1380M10 1312L75 1322M95 1360Q75 1330 78 1300 95 1275 150 1280M20 1240Q30 1290 70 1300M40 1210Q50 1265 90 1280M85 1185Q75 1240 100 1275M115 1230Q120 1190 180 1200M115 1230Q115 1270 150 1280M95 1275L97 1298M108 1272L115 1295M120 1275L130 1295',
    ],
  },
];

const TileBlock = ({ block }) => (
  <g transform={`translate(${block.x} ${block.y}) scale(0.3333)`}>
    {block.paths.map((d) => (
      <path key={d} d={d} />
    ))}
    {Object.entries(block.circles).map(([size, points]) =>
      points.map((cx, i) =>
        i % 2 ? null : <circle key={size + i} cx={cx} cy={points[i + 1]} r={radii[size]} />
      )
    )}
    {block.text?.map(([x, y, letter, size]) => (
      <Doodle key={letter} x={x} y={y} $size={size} transform={`rotate(9 ${x} ${y})`}>
        {letter}
      </Doodle>
    ))}
  </g>
);

const ChatWallpaper = () => (
  <Wallpaper aria-hidden="true">
    <defs>
      <g id="tile">
        {blocks.map((block) => (
          <TileBlock key={`${block.x}-${block.y}`} block={block} />
        ))}
      </g>
    </defs>
    {[-1, 0, 1].map((n) => (
      <use key={n} href="#tile" x={n * TILE} />
    ))}
  </Wallpaper>
);

const BubbleTail = ({ own }) => (
  <Tail $own={own} viewBox="0 0 24 32" aria-hidden="true">
    <path d="M12 0C12 14 9 22 0.5 31Q0 32 1 32C10 32 17 30 22 27L20 16 12 0Z" />
  </Tail>
);

const OwnMessage = ({ text, time }) => (
  <Bubble $own>
    <TextRow>
      <Text>{text}</Text>
      <Meta $own>
        <time>{time}</time>
        <Checks viewBox="0 0 29 20" role="img" aria-label="Read">
          <path d="M2 12L7 18 19 3M12 18L14 18 27 3" />
        </Checks>
      </Meta>
    </TextRow>
    <BubbleTail own />
  </Bubble>
);

const PointingDown = () => (
  <Hand viewBox="0 0 66 99" role="img" aria-label="Backhand index pointing down">
    <path
      d="M7 3H38Q41 14 46 22L64 58Q66 66 59 67 54 68 50 62L45 56 44 88Q43 96 38 96 32 96 32 88V59Q14 63 7 54 1 45 3 34Q8 20 7 3Z"
      fill="#fbc943"
      stroke="#e8a72c"
      strokeWidth="2"
    />
    <path d="M8 4H36L38 12Q22 17 9 12Z" fill="#ffdb73" />
    <path
      d="M5 40Q14 46 24 42M7 51Q18 56 32 50M33 58V46Q36 40 31 36M46 55L37 42"
      fill="none"
      stroke="#e3a331"
      strokeWidth="2"
      strokeLinecap="round"
    />
  </Hand>
);

const OptionsCard = ({ title, text, footer, time, options, grouped }) => (
  <CardBubble $grouped={grouped}>
    <CardBody>
      <CardTitle>{title}</CardTitle>
      <Text>{text}</Text>
      <CardFooter>
        <span>{footer}</span>
        <CardTime>{time}</CardTime>
      </CardFooter>
    </CardBody>
    {options.map((option) => (
      <OptionRow key={option}>
        <OptionButton type="button">
          <ReplyIcon viewBox="0 0 66 60" aria-hidden="true">
            <path d="M3 30L30 4V18Q62 22 63 57 52 39 30 43V57Z" />
          </ReplyIcon>
          <OptionLabel>{option}</OptionLabel>
        </OptionButton>
      </OptionRow>
    ))}
    <BubbleTail />
  </CardBubble>
);

const card = {
  title: 'Hello there!',
  text: 'Please choose an option below',
  footer: 'This is a footer',
  time: '13:28',
  options: ['Red', 'Blue'],
};

const App = () => (
  <>
    <GlobalStyle />
    <Chat>
      <ChatWallpaper />
      <OwnMessage text="test" time="13:28" />
      <OptionsCard {...card} />
      <OwnMessage text="Yellow" time="13:28" />
      <Bubble>
        <TextRow>
          <Text $large>
            Oops.. we don't understand you, please reply by selecting the buttons provided below
          </Text>
          <PointingDown />
          <Meta>
            <time>13:28</time>
          </Meta>
        </TextRow>
      </Bubble>
      <OptionsCard {...card} grouped />
    </Chat>
  </>
);

export default App;
